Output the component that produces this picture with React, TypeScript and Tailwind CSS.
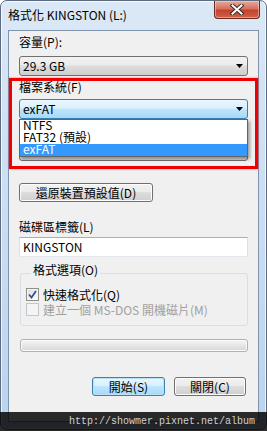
const FONT = "font-['Noto_Sans_CJK_TC','Noto_Sans',sans-serif]";

function Arrow() {
  return (
    <svg width="7" height="4" viewBox="0 0 7 4" className="shrink-0">
      <path d="M0 0h7L3.5 4z" fill="#000" />
    </svg>
  );
}

function Combo({ value, open }: { value?: string; open?: boolean }) {
  return (
    <div
      className={
        "flex h-[20px] items-center justify-between rounded-[3px] border pl-[3px] pr-[4px] " +
        (open
          ? "border-[#3c7fb1] bg-[linear-gradient(#eaf6fd_0%,#d9f0fc_45%,#bee6fd_50%,#a7d9f5_100%)]"
          : "border-[#707070] bg-[linear-gradient(#f2f2f2_0%,#ebebeb_45%,#dddddd_50%,#cfcfcf_100%)]")
      }
    >
      <span className="leading-[14px] text-black">{value}</span>
      <Arrow />
    </div>
  );
}

function Button({ label, width, focused }: { label: string; width: string; focused?: boolean }) {
  return (
    <button
      className={
        "flex h-[19px] items-center justify-center rounded-[3px] border leading-[14px] text-black " +
        width +
        (focused
          ? " border-[#3c7fb1] bg-[linear-gradient(#eaf6fd_0%,#d9f0fc_45%,#bee6fd_50%,#a7d9f5_100%)] shadow-[inset_0_0_0_1px_#b7e2fa]"
          : " border-[#707070] bg-[linear-gradient(#f2f2f2_0%,#ebebeb_45%,#dddddd_50%,#cfcfcf_100%)] shadow-[inset_0_0_0_1px_#fcfcfc]")
      }
    >
      {label}
    </button>
  );
}

function CloseButton() {
  return (
    <div className="mr-[6px] flex h-[18px] w-[46px] items-center justify-center rounded-b-[4px] border border-t-0 border-[#6b2a20] bg-[linear-gradient(#e9a99b_0%,#d7705f_45%,#c2432e_55%,#d0624a_100%)] shadow-[inset_0_0_0_1px_rgba(255,220,210,0.5)]">
      <svg width="14" height="11" viewBox="0 0 14 11">
        <path d="M2.5 1.5l9 8M11.5 1.5l-9 8" stroke="#3b2a28" strokeWidth="4" strokeLinecap="square" />
        <path d="M2.5 1.5l9 8M11.5 1.5l-9 8" stroke="#fff" strokeWidth="2" strokeLinecap="square" />
      </svg>
    </div>
  );
}

function Check({ checked, disabled }: { checked?: boolean; disabled?: boolean }) {
  return (
    <div
      className={
        "flex h-[13px] w-[13px] shrink-0 items-center justify-center border " +
        (disabled
          ? "border-[#c6c6c6] bg-[#f4f4f4]"
          : "border-[#8e8f8f] bg-[linear-gradient(135deg,#dcdcdc,#ffffff)] shadow-[inset_0_0_0_1px_#f4f4f4]")
      }
    >
      {checked && (
        <svg width="9" height="9" viewBox="0 0 9 9">
          <path d="M1 4.5l2.5 3L8 1" fill="none" stroke="#3a4f8f" strokeWidth="1.8" />
        </svg>
      )}
    </div>
  );
}

const ITEMS = ["NTFS", "FAT32 (預設)", "exFAT"];

export default function App() {
  return (
    <div className={"relative h-[431px] w-[267px] overflow-hidden bg-white text-[12px] " + FONT}>
      <div className="flex h-[430px] flex-col rounded-[7px] border border-[#5d6c80] bg-[linear-gradient(#dbe8f6_0%,#cddff3_40%,#bcd3ee_100%)] shadow-[inset_0_0_0_1px_rgba(255,255,255,0.7)]">
        {/* title bar */}
        <div className="flex h-[29px] items-start justify-between">
          <span className="pl-[7px] pt-[6px] leading-[16px] text-black">格式化 KINGSTON (L:)</span>
          <CloseButton />
        </div>

        {/* client area */}
        <div className="mx-[7px] flex flex-1 flex-col border border-[#7f95ad] bg-[#f0f0f0] pl-[10px] pr-[10px]">
          <div className="mt-[5px] leading-[12px] text-black">容量(P):</div>
          <div className="mt-[8px]">
            <Combo value="29.3 GB" />
          </div>

          <div className="-mx-[10px] mt-[2px] border-[3px] border-[#f00000] px-[7px] pb-[5px] shadow-[0_0_2px_rgba(255,0,0,0.5)]">
            <div className="leading-[12px] text-black">檔案系統(F)</div>
            <div className="relative mt-[6px]">
              <Combo value="exFAT" open />
              <div className="absolute left-0 right-0 top-full z-10 flex flex-col border border-[#646464] bg-white shadow-[2px_2px_3px_rgba(0,0,0,0.35)]">
                {ITEMS.map((item, i) => (
                  <div
                    key={item}
                    className={
                      "h-[12px] pb-[2px] pl-[3px] leading-[10px] " +
                      (i === 2 ? "bg-[#3399ff] text-white" : "text-black")
                    }
                  >
                    {item}
                  </div>
                ))}
              </div>
            </div>
            {/* allocation unit combo, hidden behind the open list */}
            <div className="mt-[22px]">
              <Combo />
            </div>
          </div>

          <div className="mt-[14px]">
            <Button label="還原裝置預設值(D)" width="w-[134px]" />
          </div>

          <div className="mt-[19px] leading-[12px] text-black">磁碟區標籤(L)</div>
          <div className="mt-[4px] flex h-[20px] items-center border border-[#abadb3] border-b-[#e3e9ef] border-x-[#dbdfe6] bg-white pl-[3px] leading-[14px] text-black">
            KINGSTON
          </div>

          <fieldset className="ml-[1px] mt-[7px] rounded-[3px] border border-[#d5dfe5] pb-[8px] pl-[5px] pt-[5px]">
            <legend className="ml-[5px] px-[2px] pb-[6px] leading-[12px] text-black">格式選項(O)</legend>
            <div className="flex h-[15px] items-center gap-[4px] text-black">
              <Check checked />
              <span className="leading-[15px]">快速格式化(Q)</span>
            </div>
            <div className="flex h-[15px] items-center gap-[4px] text-[#a0a0a0]">
              <Check disabled />
              <span className="leading-[15px]">建立一個 MS-DOS 開機磁片(M)</span>
            </div>
          </fieldset>

          <div className="ml-[1px] mt-[13px] h-[13px] rounded-[3px] border border-[#b2b2b2] bg-[linear-gradient(#f6f6f6_0%,#e6e6e6_50%,#d6d6d6_100%)] shadow-[inset_0_0_0_1px_#fafafa]" />

          <div className="mr-[2px] mt-[25px] flex justify-end gap-[9px]">
            <Button label="開始(S)" width="w-[73px]" focused />
            <Button label="關閉(C)" width="w-[72px]" />
          </div>
        </div>
        <div className="h-[7px]" />
      </div>

      {/* watermark overlay */}
      <div className="absolute bottom-0 left-0 right-0 flex h-[19px] items-center justify-end bg-black/[0.83] pr-[12px] font-['Liberation_Mono',monospace] text-[10px] leading-[19px] text-[#d0d0d0]">
        http://showmer.pixnet.net/album
      </div>
    </div>
  );
}
